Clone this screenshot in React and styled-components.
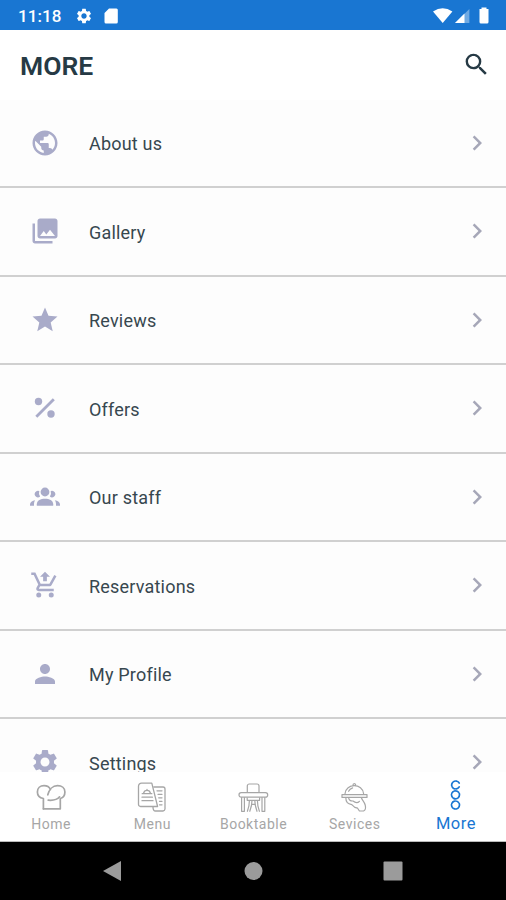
import React from 'react';
import styled, { createGlobalStyle } from 'styled-components';
import {
  MdPublic,
  MdPhotoLibrary,
  MdStar,
  MdPerson,
  MdSettings,
  MdChevronRight,
  MdSearch,
} from 'react-icons/md';

const GlobalStyle = createGlobalStyle`
  * {
    box-sizing: border-box;
  }
  body {
    margin: 0;
    font-family: Roboto, "Liberation Sans", sans-serif;
  }
  svg {
    display: block;
    flex: none;
  }
`;

const Screen = styled.div`
  width: 506px;
  height: 900px;
  display: flex;
  flex-direction: column;
  overflow: hidden;
  background: #fff;
`;

const StatusBar = styled.div`
  height: 30px;
  flex: none;
  display: flex;
  align-items: center;
  justify-content: space-between;
  padding: 1px 16px 0 18px;
  background: #1976d2;
  color: #fff;
`;

const StatusGroup = styled.div`
  display: flex;
  align-items: center;
`;

const Clock = styled.span`
  width: 57px;
  font-size: 17px;
  font-weight: 500;
  letter-spacing: 0.1px;
`;

const GearIcon = styled(MdSettings)`
  margin-right: 11px;
`;

const Header = styled.header`
  height: 69.6px;
  flex: none;
  display: flex;
  align-items: center;
  justify-content: space-between;
  padding: 0 15px 0 20px;
  color: #263a45;
`;

const Title = styled.h1`
  margin: 2px 0 0;
  font-size: 26.5px;
  font-weight: 600;
  line-height: 30px;
`;

const List = styled.ul`
  flex: 1;
  min-height: 0;
  margin: 0;
  padding: 0;
  overflow: hidden;
  list-style: none;
  background: #fdfdfd;
`;

const Row = styled.li`
  height: 88.5px;
  display: flex;
  align-items: center;
  padding: 0 14px 0 30px;
  border-bottom: 2px solid #d0d0d0;
  color: #a9abc9;
`;

const Label = styled.span`
  flex: 1;
  margin: 3px 0 0 29px;
  font-size: 18px;
  line-height: 24px;
  letter-spacing: 0.2px;
  color: #37474f;
`;

const Chevron = styled(MdChevronRight)`
  color: #a6a7b8;
`;

const TabBar = styled.nav`
  height: 70px;
  flex: none;
  display: flex;
  background: #fff;
  border-bottom: 1px solid #bbb;
`;

const Tab = styled.div`
  flex: 1;
  display: flex;
  flex-direction: column;
  align-items: center;
  padding-top: 8px;
  font-size: ${(props) => (props.$active ? '16.5px' : '14px')};
  line-height: 18px;
  letter-spacing: 0.5px;
  color: ${(props) => (props.$active ? '#1976d2' : '#a6a6a6')};
`;

const TabLabel = styled.span`
  margin: 3px 0 0 1px;
`;

const SystemBar = styled.div`
  height: 58px;
  flex: none;
  display: flex;
  align-items: center;
  justify-content: space-between;
  padding: 0 103px 0 102px;
  background: #000;
  color: #9b9b9b;
`;

const SdCard = () => (
  <svg width="14" height="16" viewBox="0 0 14 16" fill="currentColor">
    <path d="M5 0.5h7.4A1.4 1.4 0 0 1 13.8 2v12a1.5 1.5 0 0 1-1.5 1.5H2A1.5 1.5 0 0 1 .5 14V5z" />
  </svg>
);

const StatusIcons = () => (
  <svg width="57" height="18" viewBox="0 0 57 18" fill="currentColor">
    <path d="M0 4.4Q9.7-1.7 19.4 4.4L9.7 16z" />
    <path d="M36.4 2v14H22z" opacity=".38" />
    <path d="M31.5 6.5V16H22z" />
    <path d="M46.5 2h2V.5h5V2h2v13a1.5 1.5 0 0 1-1.5 1.5h-6a1.5 1.5 0 0 1-1.5-1.5z" />
  </svg>
);

const Percent = () => (
  <svg width="30" height="30" viewBox="0 0 30 30" fill="currentColor">
    <circle cx="8.5" cy="8.5" r="3.7" />
    <circle cx="21" cy="21" r="3.7" />
    <path d="M5.3 22.8L22.8 5.3l2 2L7.3 24.8z" />
  </svg>
);

const People = () => (
  <svg width="30" height="30" viewBox="0 0 30 30" fill="currentColor">
    <circle cx="15" cy="10" r="4.4" />
    <path d="M9.3 9a6.4 6.4 0 0 0 .8 5.6A3.3 3.3 0 1 1 9.3 9zM20.7 9a6.4 6.4 0 0 1-.8 5.6A3.3 3.3 0 1 0 20.7 9z" />
    <path d="M6.8 23.8v-1.6c0-3.6 4-5.4 8.2-5.4s8.2 1.8 8.2 5.4v1.6z" />
    <path d="M0 23.8v-1.2c0-2.4 2-3.9 5.2-4.4-.8 1-1.2 2.2-1.2 4v1.6zM30 23.8v-1.2c0-2.4-2-3.9-5.2-4.4.8 1 1.2 2.2 1.2 4v1.6z" />
  </svg>
);

const CartUp = () => (
  <svg width="30" height="30" viewBox="0 0 24 24" fill="currentColor">
    <path d="M10.5 9h3V5.4H16L12 1.4 8 5.4h2.5z" />
    <path d="M7 18a2 2 0 1 0 0 4 2 2 0 0 0 0-4zm10 0a2 2 0 1 0 0 4 2 2 0 0 0 0-4zm-9.83-3.25l.03-.12.9-1.63h7.45c.75 0 1.41-.41 1.75-1.03l3.86-7.01L19.42 4h-.01l-1.1 2-2.76 5H8.53L6.16 6l-1.89-4H1v2h2l3.6 7.59-1.35 2.45C4.52 15.37 5.48 17 7 17h12v-2H7.42a.25.25 0 0 1-.25-.25z" />
  </svg>
);

// outlined tab bar icons share one stroke setup
const Outline = styled.svg.attrs({ width: 32, height: 32, viewBox: '0 0 32 32' })`
  fill: none;
  stroke: currentColor;
  stroke-width: ${(props) => props.$weight || 1.2};
  stroke-linecap: round;
  stroke-linejoin: round;
`;

const ChefHat = () => (
  <Outline $weight={1.7}>
    <path d="M8.4 28.8V18.5C4.6 17.8 2.4 15.2 2.4 12 2.4 8.2 5.2 5.7 9 5.7c3 0 5.3 1.3 6.4 3.8" />
    <path d="M12.8 14.8C14 9.5 17.8 5.7 22.5 5.7c4.4 0 7.4 2.6 7.4 6.2 0 3.2-2 5.8-4.6 6.6v10.3H8.4" />
    <path d="M13.2 20.2c4.5.4 8.8-.2 11.4-3.4" />
  </Outline>
);

const MenuCard = () => (
  <Outline $weight={1.3}>
    <path d="M5.5 3.2h10.3l5.8 23.3H4.5a2 2 0 0 1-2-2V6.2a3 3 0 0 1 3-3z" />
    <path d="M17.8 7H27a2 2 0 0 1 2 2v20a2.2 2.2 0 0 1-2 2h-7.5c-1.8 0-2.5-1.5-2.5-4.1M21 10.8h5M22 14.3h4M22.7 17.8H26M23.5 21.3H26M23.5 24.8H26" />
    <path d="M6.2 13.7h9.6M7.5 13.3c1-3.8 6-3.8 7 0M11 9.3v1M6 17.2h10.4M6 20.7h11" />
  </Outline>
);

const BookTable = () => (
  <Outline>
    <path d="M10.3 12.5V6a2 2 0 0 1 2-2H20a2 2 0 0 1 2 2v6.5" />
    <rect x="2" y="12.7" width="28.7" height="4.4" rx="2.2" />
    <path d="M4.6 17.5v13.8h2.8V17.5M25 17.5v13.8h2.8V17.5M10.2 17.8v2.5h12.4v-2.5M12.4 20.5c0 4.5-.8 7.5-2 10.8M15 20.5c0 4-1 7.5-2.2 10.8M20.4 20.5c0 4.5.8 7.5 2 10.8M17.8 20.5c0 4 1 7.5 2.2 10.8M14.6 24.3h3.8" />
  </Outline>
);

const Cloche = () => (
  <Outline>
    <path d="M7 13.8C7.8 3 24.8 3 25.6 13.8M14.9 5.5c0-2.6 2.9-2.6 2.9 0M10.6 11.3c.8-1.8 2-2.8 4-3.4" />
    <path d="M4 14.6h25v2.8H4zM7.8 17.6c0 5 2 6.2 6 7l3 2.8 2.8.8 1.8 2.8h4.2c2.4-1 2.1-4 1.6-6-.8-3.2-3-4.6-3.8-7.2M10.6 17.8c.5 2.4 1.8 3.4 4.4 3.2 2.2 1.8 4.8 2 6.4.3" />
  </Outline>
);

const MoreDots = () => (
  <Outline $weight={1.7} strokeDasharray="3.4 1.2" strokeLinecap="butt">
    <path d="M20.2 6.9A4 4 0 1 1 20.2 3.1" />
    <circle cx="16.5" cy="14.8" r="4" />
    <circle cx="16.5" cy="25" r="4" />
  </Outline>
);

const rows = [
  { label: 'About us', icon: <MdPublic size={30} /> },
  { label: 'Gallery', icon: <MdPhotoLibrary size={30} /> },
  { label: 'Reviews', icon: <MdStar size={30} /> },
  { label: 'Offers', icon: <Percent /> },
  { label: 'Our staff', icon: <People /> },
  { label: 'Reservations', icon: <CartUp /> },
  { label: 'My Profile', icon: <MdPerson size={30} /> },
  { label: 'Settings', icon: <MdSettings size={30} /> },
];

const tabs = [
  { label: 'Home', icon: <ChefHat /> },
  { label: 'Menu', icon: <MenuCard /> },
  { label: 'Booktable', icon: <BookTable /> },
  { label: 'Sevices', icon: <Cloche /> },
  { label: 'More', icon: <MoreDots />, active: true },
];

function App() {
  return (
    <Screen>
      <GlobalStyle />
      <StatusBar>
        <StatusGroup>
          <Clock>11:18</Clock>
          <GearIcon size={18} />
          <SdCard />
        </StatusGroup>
        <StatusIcons />
      </StatusBar>
      <Header>
        <Title>MORE</Title>
        <MdSearch size={29} />
      </Header>
      <List>
        {rows.map((row) => (
          <Row key={row.label}>
            {row.icon}
            <Label>{row.label}</Label>
            <Chevron size={30} />
          </Row>
        ))}
      </List>
      <TabBar>
        {tabs.map((tab) => (
          <Tab key={tab.label} $active={tab.active}>
            {tab.icon}
            <TabLabel>{tab.label}</TabLabel>
          </Tab>
        ))}
      </TabBar>
      <SystemBar>
        <svg width="20" height="22" viewBox="0 0 20 22" fill="currentColor">
          <path d="M1 11L19 1v20z" />
        </svg>
        <svg width="20" height="20" viewBox="0 0 20 20" fill="currentColor">
          <circle cx="10.5" cy="10" r="9" />
        </svg>
        <svg width="20" height="20" viewBox="0 0 20 20" fill="currentColor">
          <rect x=".5" y=".5" width="19" height="19" rx="1" />
        </svg>
      </SystemBar>
    </Screen>
  );
}

export default App;
